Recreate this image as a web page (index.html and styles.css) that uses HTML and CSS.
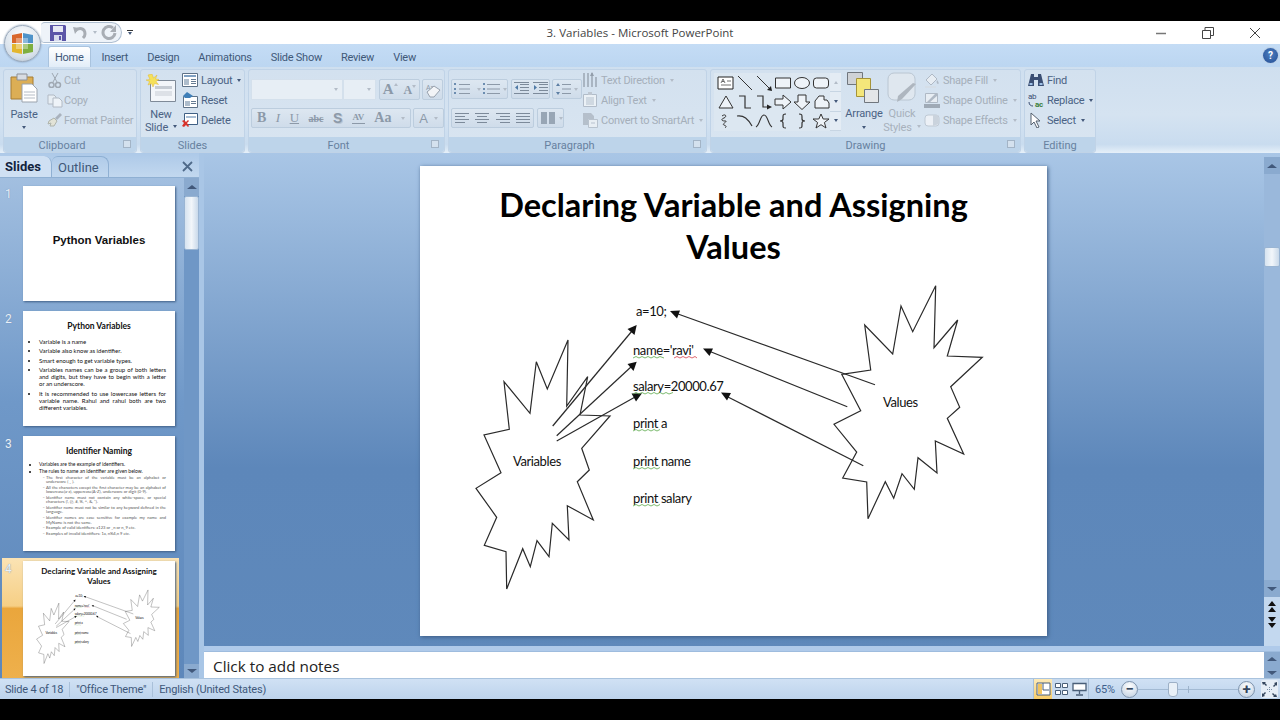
FILE: index.html
```html
<!DOCTYPE html>
<html lang="en">
<head>
    <meta charset="UTF-8">
    <meta name="viewport" content="width=device-width, initial-scale=1.0">
    <title>3. Variables - Microsoft PowerPoint</title>
    <link rel="stylesheet" href="styles.css">
</head>
<body>
    <div class="app">
        <div class="office-btn">
            <svg width="23" height="23" viewBox="0 0 23 23">
                <path d="M1 3l10-2v10H1z" fill="#d9672c"/>
                <path d="M12 1l10 2v8H12z" fill="#4f93c9"/>
                <path d="M1 12h10v10L1 20z" fill="#e3b62e"/>
                <path d="M12 12h10v8l-10 2z" fill="#7eaf3f"/>
                <path d="M5 6h12v11H5z" fill="#fff" opacity=".35"/>
            </svg>
        </div>

        <!-- title bar -->
        <div class="titlebar">
            <div class="qat-wrap">
                <div class="qat">
                    <svg width="16" height="16" viewBox="0 0 16 16">
                        <path d="M0 0h15l1 1v15H0z" fill="#5b55a8"/>
                        <path d="M3 1h10v6H3z" fill="#e6e8f4"/>
                        <path d="M4 10h8v6H4z" fill="#d8dcee"/>
                        <path d="M9 11h2v4H9z" fill="#5b55a8"/>
                    </svg>
                    <svg width="16" height="16" viewBox="0 0 16 16">
                        <path d="M2 6c4-4 10-3 10 3 0 2-1 3-2 4" fill="none" stroke="#a8adb4" stroke-width="3"/>
                        <path d="M0 2l6 1-4 6z" fill="#a8adb4"/>
                    </svg>
                    <span class="caret qat-caret"></span>
                    <svg width="16" height="16" viewBox="0 0 16 16">
                        <path d="M12 3a6 6 0 1 0 2 5" fill="none" stroke="#a8adb4" stroke-width="3"/>
                        <path d="M15 0v7H9z" fill="#a8adb4"/>
                    </svg>
                </div>
                <div class="qat-more">
                    <i></i>
                    <span class="caret dark"></span>
                </div>
            </div>
            <div class="doc-title">3. Variables - Microsoft PowerPoint</div>
            <div class="win-btns">
                <svg width="12" height="12" viewBox="0 0 12 12"><path d="M1 6.500h10" stroke="#777" stroke-width="1.500"/></svg>
                <svg width="12" height="12" viewBox="0 0 12 12"><path d="M.5 3.500h8v8h-8zM3 3.500V.5h8.500v8H8.500" fill="none" stroke="#444"/></svg>
                <svg width="12" height="12" viewBox="0 0 12 12"><path d="M1 1l10 10M11 1L1 11" stroke="#444"/></svg>
            </div>
        </div>

        <!-- tabs -->
        <div class="tabs">
            <a class="tab active" href="#">Home</a>
            <a class="tab" href="#">Insert</a>
            <a class="tab" href="#">Design</a>
            <a class="tab" href="#">Animations</a>
            <a class="tab" href="#">Slide Show</a>
            <a class="tab" href="#">Review</a>
            <a class="tab" href="#">View</a>
            <div class="help">?</div>
        </div>

        <!-- ribbon -->
        <div class="ribbon">
            <div class="group g-clipboard">
                <div class="group-body">
                    <div class="big-btn paste">
                        <svg width="28" height="30" viewBox="0 0 28 30">
                            <path d="M1 4h22v22H1z" fill="#dcae55" stroke="#a67c34"/>
                            <path d="M7 1h10v6H7z" fill="#d8dce2" stroke="#8b8f96"/>
                            <path d="M12 11h10l5 5v13H12z" fill="#fff" stroke="#9ba3ad"/>
                            <path d="M14 19h11M14 22h11M14 25h11" stroke="#b5bcc6"/>
                        </svg>
                        <span class="big-label">Paste</span>
                        <span class="caret dark"></span>
                    </div>
                    <div class="small-col">
                        <div class="small-btn off">
                            <svg class="ico" viewBox="0 0 16 16"><path d="M5 1l5 9M11 1L6 10" stroke="#8e959e" fill="none"/><circle cx="4.500" cy="13" r="2.500" fill="none" stroke="#8e959e" stroke-width="1.500"/><circle cx="11" cy="13" r="2.500" fill="none" stroke="#8e959e" stroke-width="1.500"/></svg>
                            Cut
                        </div>
                        <div class="small-btn off">
                            <svg class="ico" viewBox="0 0 16 16"><path d="M1 3h6l2 2v7H1z" fill="#eef2f6" stroke="#a6adb6"/><path d="M6 6h6l3 3v6H6z" fill="#f7f9fb" stroke="#a6adb6"/></svg>
                            Copy
                        </div>
                        <div class="small-btn off">
                            <svg class="ico" viewBox="0 0 16 16"><path d="M8 6l5-5 2 2-5 5z" fill="#9aa2ac"/><path d="M2 9l5-3 3 3-3 5H3l1-3-3 1z" fill="#e6e3cf" stroke="#a2a596"/></svg>
                            Format Painter
                        </div>
                    </div>
                </div>
                <div class="group-label shifted">Clipboard<span class="launcher"></span></div>
            </div>

            <div class="group g-slides">
                <div class="group-body">
                    <div class="big-btn new-slide">
                        <svg width="30" height="28" viewBox="0 0 30 28">
                            <path d="M4.500 6.500h25v21h-25z" fill="#f3f6fa" stroke="#7f8a98"/>
                            <path d="M9 12h17v3H9z" fill="#c6ccd4"/>
                            <path d="M9 17h17v5H9z" fill="#dde1e7"/>
                            <path d="M6 0l1.500 4L11 1l-1.500 4 3.500.5-3 2 2.500 3-4-1L7 13 5.500 9.500 2 11l1.500-3.500L0 6l4-.5L2 1z" fill="#f5e15a" stroke="#e0b93a" stroke-width=".5"/>
                        </svg>
                        <span class="big-label">New<br>Slide<span class="caret dark inline"></span></span>
                    </div>
                    <div class="small-col on">
                        <div class="small-btn">
                            <svg class="ico" viewBox="0 0 16 16"><path d="M.5 1.500h15v13H.5z" fill="#fff" stroke="#5e7288"/><path d="M2 3h12v2H2z" fill="#7fa0c2"/><path d="M2 7h5v6H2z" fill="#aebdcc"/><path d="M9 7h5v1H9zM9 9h5v1H9zM9 11h5v1H9z" fill="#667c93"/></svg>
                            Layout<span class="caret dark inline"></span>
                        </div>
                        <div class="small-btn">
                            <svg class="ico" viewBox="0 0 16 16"><path d="M1.500 4.500h14v11h-14z" fill="#fff" stroke="#5e7288"/><path d="M3 9h5v5H3z" fill="#aebdcc"/><path d="M9 9h5v1H9zM9 11h5v1H9z" fill="#667c93"/><path d="M1 4l4-4 6 4-3 2H3z" fill="#3f7fb8"/></svg>
                            Reset
                        </div>
                        <div class="small-btn">
                            <svg class="ico" viewBox="0 0 16 16"><path d="M2.500 1.500h13v11h-13z" fill="#fff" stroke="#3f5f84"/><path d="M4 4h10v2H4z" fill="#a9bed4"/><path d="M0 9l2-1 2 2 2-2 1 1-2 2 2 3-1 1-2-2-2 2-2-1 2-3z" fill="#d8322a"/></svg>
                            Delete
                        </div>
                    </div>
                </div>
                <div class="group-label">Slides</div>
            </div>

            <div class="group g-font">
                <div class="group-body font-body">
                    <div class="font-row">
                        <div class="combo name"><span class="caret"></span></div>
                        <div class="combo size"><span class="caret"></span></div>
                        <div class="btn-box grow">
                            <span class="serif-a">A<sup class="caret up"></sup></span>
                            <span class="serif-a small">A<sup class="caret"></sup></span>
                        </div>
                        <div class="btn-box clear">
                            <svg width="18" height="16" viewBox="0 0 18 16"><text x="2" y="8" class="mini">Aa</text><path d="M3 10l7-6 6 4-6 7H6z" fill="#f2f4f7" stroke="#98a2ae"/></svg>
                        </div>
                    </div>
                    <div class="font-row">
                        <div class="btn-box fmt">
                            <b>B</b><i>I</i><u>U</u><s class="abc">abc</s><b class="shadow-s">S</b>
                            <span class="av">AV<em></em></span>
                            <span class="aa">Aa</span><span class="caret"></span>
                        </div>
                        <div class="btn-box color"><span>A</span><span class="caret"></span></div>
                    </div>
                </div>
                <div class="group-label shifted">Font<span class="launcher"></span></div>
            </div>

            <div class="group g-paragraph">
                <div class="group-body para-body">
                    <div class="para-left">
                        <div class="font-row">
                            <div class="btn-box lists">
                                <svg width="24" height="14" viewBox="0 0 24 14"><path d="M7 2.500h11M7 7h11M7 11.500h11" stroke="#8c99a8"/><path d="M2 1h2v2H2zM2 6h2v2H2zM2 10h2v2H2z" fill="#6c8db0"/></svg>
                                <span class="caret"></span>
                                <svg width="20" height="14" viewBox="0 0 20 14"><path d="M5 2.500h13M5 7h13M5 11.500h13" stroke="#8c99a8"/><path d="M1 1h2v2H1zM1 6h2v2H1zM1 10h2v2H1z" fill="#6c8db0"/></svg>
                                <span class="caret"></span>
                            </div>
                            <div class="btn-box indents">
                                <svg width="15" height="14" viewBox="0 0 15 14"><path d="M6 2.500h9M6 5.500h9M6 8.500h9M0 11.500h15M0 .5h15" stroke="#7c8a9a"/><path d="M4 3v5L1 5.500z" fill="#4f7aa6"/></svg>
                                <svg width="15" height="14" viewBox="0 0 15 14"><path d="M6 2.500h9M6 5.500h9M6 8.500h9M0 11.500h15M0 .5h15" stroke="#7c8a9a"/><path d="M1 3v5l3-2.500z" fill="#4f7aa6"/></svg>
                            </div>
                            <div class="btn-box spacing">
                                <svg width="16" height="14" viewBox="0 0 16 14"><path d="M7 2.500h9M7 7h9M7 11.500h9" stroke="#8c99a8"/><path d="M3 1l2 3H1zM3 13l2-3H1z" fill="#5d7fa4"/></svg>
                                <span class="caret"></span>
                            </div>
                        </div>
                        <div class="font-row">
                            <div class="btn-box aligns">
                                <svg width="16" height="13" viewBox="0 0 16 13"><path d="M1 1.500h14M1 4.500h10M1 7.500h14M1 10.500h10" stroke="#7c8a9a"/></svg>
                                <svg width="16" height="13" viewBox="0 0 16 13"><path d="M1 1.500h14M3 4.500h10M1 7.500h14M3 10.500h10" stroke="#7c8a9a"/></svg>
                                <svg width="16" height="13" viewBox="0 0 16 13"><path d="M1 1.500h14M5 4.500h10M1 7.500h14M5 10.500h10" stroke="#7c8a9a"/></svg>
                                <svg width="16" height="13" viewBox="0 0 16 13"><path d="M1 1.500h14M1 4.500h14M1 7.500h14M1 10.500h14" stroke="#7c8a9a"/></svg>
                            </div>
                            <div class="btn-box cols">
                                <svg width="14" height="14" viewBox="0 0 14 14"><path d="M0 1h6v12H0zM8 1h6v12H8z" fill="#98a6b5"/></svg>
                                <span class="caret"></span>
                            </div>
                        </div>
                    </div>
                    <div class="small-col">
                        <div class="small-btn off">
                            <svg class="ico" viewBox="0 0 16 16"><path d="M2 1v14M6 1v14M10 1v14M14 5v10" stroke="#7d8793" stroke-width="1.300"/><path d="M10 0l2 4H8z" fill="#7d8793"/></svg>
                            Text Direction<span class="caret inline"></span>
                        </div>
                        <div class="small-btn off">
                            <svg class="ico" viewBox="0 0 16 16"><path d="M1.500 2.500h13v12h-13z" fill="#f3f6f9" stroke="#a6b0bc"/><path d="M4 6h8M4 8h8M4 10h8M4 12h8" stroke="#a9b5c2"/><path d="M6 0h4v3H6z" fill="#b7bec8"/></svg>
                            Align Text<span class="caret inline"></span>
                        </div>
                        <div class="small-btn off">
                            <svg class="ico" viewBox="0 0 16 16"><path d="M1 1h8l3 3v3H6v6H1z" fill="#aab4bf"/><path d="M6.500 7.500h9v8h-9z" fill="#eef2f5" stroke="#aeb8c3"/><path d="M9 11h4" stroke="#aeb8c3"/></svg>
                            Convert to SmartArt<span class="caret inline"></span>
                        </div>
                    </div>
                </div>
                <div class="group-label shifted">Paragraph<span class="launcher"></span></div>
            </div>

            <div class="group g-drawing">
                <div class="group-body draw-body">
                    <div class="gallery">
                        <div class="shapes">
                            <svg viewBox="0 0 18 16"><path d="M1 2h15v12H1z" fill="#fff" stroke="#222"/><path d="M4 8l2-4 2 4M5 6.500h2M10 6h4M4 10h10" fill="none" stroke="#333" stroke-width=".7"/></svg>
                            <svg viewBox="0 0 18 16"><path d="M2 1l14 14" stroke="#333"/></svg>
                            <svg viewBox="0 0 18 16"><path d="M2 1l12 12" stroke="#333"/><path d="M17 16l-5-1 4-4z" fill="#222"/></svg>
                            <svg viewBox="0 0 18 16"><path d="M1.500 3h15v10h-15z" fill="#eef3f8" stroke="#333"/></svg>
                            <svg viewBox="0 0 18 16"><ellipse cx="9" cy="8" rx="7.500" ry="5.500" fill="#eef3f8" stroke="#333"/></svg>
                            <svg viewBox="0 0 18 16"><rect x="1.500" y="3" width="15" height="10" rx="3" fill="#eef3f8" stroke="#333"/></svg>
                            <svg viewBox="0 0 18 16"><path d="M9 2l7 12H2z" fill="#eef3f8" stroke="#333"/></svg>
                            <svg viewBox="0 0 18 16"><path d="M3 2h6v12h6" fill="none" stroke="#333" stroke-width="1.200"/></svg>
                            <svg viewBox="0 0 18 16"><path d="M2 2h6v11h5" fill="none" stroke="#333" stroke-width="1.200"/><path d="M12 10.500l5 2.500-5 2.500z" fill="#222"/></svg>
                            <svg viewBox="0 0 18 16"><path d="M1 5h8V1l8 7-8 7v-4H1z" fill="#eef3f8" stroke="#333"/></svg>
                            <svg viewBox="0 0 18 16"><path d="M5 1h8v7h4l-8 7.500L1 8h4z" fill="#eef3f8" stroke="#333"/></svg>
                            <svg viewBox="0 0 18 16"><path d="M3 14V7l4-5h5v4h3l2 3v5z" fill="#eef3f8" stroke="#333"/></svg>
                            <svg viewBox="0 0 18 16"><path d="M5 3c4-3 5 1 2 2s-3 3 1 3-4 3-1 4 2 2 1 3" fill="none" stroke="#333"/></svg>
                            <svg viewBox="0 0 18 16"><path d="M1 3c7-1 11 3 15 10" fill="none" stroke="#333" stroke-width="1.200"/></svg>
                            <svg viewBox="0 0 18 16"><path d="M1 14C5 12 5 2 9 2s4 10 8 12" fill="none" stroke="#333" stroke-width="1.200"/></svg>
                            <svg viewBox="0 0 18 16"><path d="M12 1c-3 0-3 1-3 3v2c0 1-1 2-3 2 2 0 3 1 3 2v2c0 2 0 3 3 3" fill="none" stroke="#333" stroke-width="1.200"/></svg>
                            <svg viewBox="0 0 18 16"><path d="M6 1c3 0 3 1 3 3v2c0 1 1 2 3 2-2 0-3 1-3 2v2c0 2 0 3-3 3" fill="none" stroke="#333" stroke-width="1.200"/></svg>
                            <svg viewBox="0 0 18 16"><path d="M9 1l2.200 5H17l-4.600 3.500L14 15l-5-3.300L4 15l1.600-5.500L1 6h5.800z" fill="#eef3f8" stroke="#333"/></svg>
                        </div>
                        <div class="spin">
                            <span><i class="caret up"></i></span>
                            <span><i class="caret dark"></i></span>
                            <span class="more"><i class="caret dark"></i></span>
                        </div>
                    </div>
                    <div class="big-btn arrange">
                        <svg width="35" height="31" viewBox="0 0 35 31">
                            <path d="M.5.5h15v12H.5z" fill="#cfd2d6" stroke="#70767d"/>
                            <path d="M9.500 6.500h14v18h-14z" fill="#f4e67a" stroke="#a59338"/>
                            <path d="M17.500 17.500h14v13h-14z" fill="#e4e6e8" stroke="#70767d"/>
                        </svg>
                        <span class="big-label">Arrange</span>
                        <span class="caret dark"></span>
                    </div>
                    <div class="big-btn quick off">
                        <svg width="31" height="31" viewBox="0 0 31 31">
                            <rect x="1" y="1" width="27" height="27" rx="6" fill="#dfe7ef" stroke="#bac6d2"/>
                            <path d="M29 12L15 27l-5 3 1-6 15-13z" fill="#aeb6bf"/>
                        </svg>
                        <span class="big-label">Quick<br>Styles<span class="caret inline"></span></span>
                    </div>
                    <div class="small-col">
                        <div class="small-btn off">
                            <svg class="ico" viewBox="0 0 16 16"><path d="M2 8l6-6 5 5-6 6z" fill="#eef1f5" stroke="#a3acb7"/><path d="M13 8c2 2 2 4 1 4s-2-2-1-4z" fill="#a3acb7"/><path d="M1 14h11v2H1z" fill="#d6dde5"/></svg>
                            Shape Fill<span class="caret inline"></span>
                        </div>
                        <div class="small-btn off">
                            <svg class="ico" viewBox="0 0 16 16"><path d="M1.500 1.500h12v9h-12z" fill="#eef1f5" stroke="#a3acb7"/><path d="M3 10l9-9 2 2-9 8z" fill="#a3acb7"/><path d="M0 12h16v4H0z" fill="#8d97a3"/></svg>
                            Shape Outline<span class="caret inline"></span>
                        </div>
                        <div class="small-btn off">
                            <svg class="ico" viewBox="0 0 16 16"><rect x="1" y="3" width="14" height="11" rx="3" fill="#f3f5f8" stroke="#b8c1cc"/><path d="M9 3h5l1 5v4l-6 2z" fill="#c6ced7"/></svg>
                            Shape Effects<span class="caret inline"></span>
                        </div>
                    </div>
                </div>
                <div class="group-label">Drawing<span class="launcher"></span></div>
            </div>

            <div class="group g-editing">
                <div class="group-body">
                    <div class="small-col on">
                        <div class="small-btn">
                            <svg class="ico" viewBox="0 0 16 16"><path d="M3 2h3v3h4V2h3l3 12H10V8H6v6H0z" fill="#3a4e73"/><path d="M1.500 11h3v2h-3zM11.500 11h3v2h-3z" fill="#9fc1e6"/></svg>
                            Find
                        </div>
                        <div class="small-btn">
                            <svg class="ico" viewBox="0 0 16 16"><text x="0" y="7" class="mini dk">ab</text><text x="7" y="15" class="mini gr">ac</text><path d="M1 10c0 3 2 4 4 4" fill="none" stroke="#3a4e73"/></svg>
                            Replace<span class="caret dark inline"></span>
                        </div>
                        <div class="small-btn">
                            <svg class="ico" viewBox="0 0 16 16"><path d="M3 1v12l3-3 3 6 2-1-3-6h4z" fill="#fff" stroke="#55606e"/></svg>
                            Select<span class="caret dark inline"></span>
                        </div>
                    </div>
                </div>
                <div class="group-label">Editing</div>
            </div>
        </div>

        <!-- work area -->
        <div class="work">
            <div class="side">
                <div class="side-tabs">
                    <div class="side-tab active">Slides</div>
                    <div class="side-tab">Outline</div>
                    <svg class="side-close" width="11" height="11" viewBox="0 0 11 11"><path d="M1 1l9 9M10 1l-9 9" stroke="#4f6a8a" stroke-width="1.800"/></svg>
                </div>
                <div class="side-body">
                    <div class="thumb-list">
                        <div class="thumb-row">
                            <span class="num">1</span>
                            <div class="thumb cover"><b>Python Variables</b></div>
                        </div>
                        <div class="thumb-row">
                            <span class="num">2</span>
                            <div class="thumb">
                                <div class="t-title">Python Variables</div>
                                <ul class="t-list">
                                    <li>Variable is a name</li>
                                    <li>Variable also know as identifier.</li>
                                    <li>Smart enough to get variable types.</li>
                                    <li>Variables names can be a group of both letters and digits, but they have to begin with a letter or an underscore.</li>
                                    <li>It is recommended to use lowercase letters for variable name. Rahul and rahul both are two different variables.</li>
                                </ul>
                            </div>
                        </div>
                        <div class="thumb-row">
                            <span class="num">3</span>
                            <div class="thumb">
                                <div class="t-title">Identifier Naming</div>
                                <ul class="t-list tiny">
                                    <li>Variables are the example of identifiers.</li>
                                    <li>The rules to name an identifier are given below.
                                        <ul>
                                            <li>The first character of the variable must be an alphabet or underscore ( _ ).</li>
                                            <li>All the characters except the first character may be an alphabet of lowercase(a-z), uppercase(A-Z), underscore or digit (0-9).</li>
                                            <li>Identifier name must not contain any white-space, or special characters (!, @, #, %, ^, &amp;, *).</li>
                                            <li>Identifier name must not be similar to any keyword defined in the language.</li>
                                            <li>Identifier names are case sensitive for example my name and MyName is not the same.</li>
                                            <li>Example of valid identifiers: a123 or _n or n_9 etc.</li>
                                            <li>Examples of invalid identifiers: 1a, n%4,n 9 etc.</li>
                                        </ul>
                                    </li>
                                </ul>
                            </div>
                        </div>
                        <div class="thumb-row selected">
                            <span class="num">4</span>
                            <div class="thumb">
                                <div class="t-title two">Declaring Variable and Assigning Values</div>
                                <svg class="t-diagram" viewBox="420 270 627 366"><use href="#diagram"/></svg>
                            </div>
                        </div>
                    </div>
                    <div class="scroll side-scroll">
                        <div class="arrow-btn"><span class="tri up"></span></div>
                        <div class="scroll-thumb"></div>
                        <div class="scroll-track"></div>
                        <div class="arrow-btn end"><span class="tri"></span></div>
                    </div>
                </div>
            </div>

            <div class="editor">
                <div class="editor-top">
                    <div class="canvas">
                        <div class="slide">
                            <h1>Declaring Variable and Assigning Values</h1>
                            <svg class="diagram" viewBox="420 270 627 366">
                                <g id="diagram">
                                    <g class="ink">
                                        <polygon points="580,415 610,416 581.7,448.3 589.3,470 577.3,481.7 593.3,520 567.3,505.7 569,540 552.3,523.3 549,556.7 537,540.7 530.3,566.7 522.7,548.7 506.7,589 506,551.7 484.3,545.3 496.7,517.3 476,488.3 501,472.7 484,435 509.3,429.3 504,381.7 530,413.3 536.3,361.7 547.3,389 568,340 566.7,406 587.7,376.7"/>
                                        <polygon points="841.7,374.3 870.7,370 864.7,325 892.7,354 901,306 912.7,331.7 935.7,285.7 934,347.7 957.7,320 947.3,356 982.3,357.3 950.7,386.7 959.7,407.3 947.3,418.3 963.7,454 935.3,441 937,473 918,457.7 914.3,489.3 902,473.7 893.7,498.3 885.3,481.7 868,518.7 866.7,482 842.7,478 856.7,452 834,424.3 860.7,410.7"/>
                                        <line x1="552.7" y1="426" x2="632" y2="331"/>
                                        <line x1="556.7" y1="435.7" x2="632" y2="366"/>
                                        <line x1="556.7" y1="441" x2="636" y2="396.5"/>
                                        <line x1="875" y1="384.7" x2="678" y2="314"/>
                                        <line x1="847.3" y1="406.7" x2="710" y2="351.5"/>
                                        <line x1="863.3" y1="465.7" x2="727" y2="396.5"/>
                                    </g>
                                    <g class="heads">
                                        <polygon points="636.7,325 634.5,335 627.5,329"/>
                                        <polygon points="636.7,361.7 633.5,371 627.5,364"/>
                                        <polygon points="642,393.3 636,401.5 631.5,393.5"/>
                                        <polygon points="670,311 680,310.5 677,318.5"/>
                                        <polygon points="703,348.5 713,348.5 709.5,356"/>
                                        <polygon points="721,392.5 731,393 727,400.5"/>
                                    </g>
                                    <g class="words">
                                        <text x="636" y="316">a=10;</text>
                                        <text x="633" y="355">name='ravi'</text>
                                        <text x="633" y="391">salary=20000.67</text>
                                        <text x="633" y="428">print a</text>
                                        <text x="633" y="466">print name</text>
                                        <text x="633" y="503">print salary</text>
                                        <text x="513" y="465.500">Variables</text>
                                        <text x="883" y="407">Values</text>
                                    </g>
                                    <g class="squiggle green">
                                        <polyline points="633,358 636,356.500 639,358 642,356.500 645,358 648,356.500 651,358 654,356.500 657,358 660,356.500 664,358"/>
                                        <polyline points="633,394 636,392.500 639,394 642,392.500 645,394 648,392.500 651,394 654,392.500 657,394 660,392.500 663,394 666,392.500 669,394 673,392.500"/>
                                        <polyline points="633,431 636,429.500 639,431 642,429.500 645,431 648,429.500 651,431 654,429.500 657,431 660,429.500"/>
                                        <polyline points="633,469 636,467.500 639,469 642,467.500 645,469 648,467.500 651,469 654,467.500 657,469 660,467.500"/>
                                        <polyline points="633,506 636,504.500 639,506 642,504.500 645,506 648,504.500 651,506 654,504.500 657,506 660,504.500"/>
                                    </g>
                                    <polyline class="squiggle red" points="674,358 677,356.500 680,358 683,356.500 686,358 689,356.500 692,358 695,356.500 697,358"/>
                                </g>
                            </svg>
                        </div>
                    </div>
                    <div class="scroll main-scroll">
                        <div class="arrow-btn"><span class="tri up"></span></div>
                        <div class="scroll-gap"></div>
                        <div class="scroll-thumb short"></div>
                        <div class="scroll-track"></div>
                        <div class="arrow-btn"><span class="tri"></span></div>
                        <div class="page-btns">
                            <svg width="10" height="12" viewBox="0 0 10 12"><path d="M5 0l4 5H1zM5 6l4 5H1z" fill="#111"/></svg>
                            <svg width="10" height="12" viewBox="0 0 10 12"><path d="M1 1h8L5 6zM1 7h8l-4 5z" fill="#111"/></svg>
                        </div>
                    </div>
                </div>
                <div class="notes">
                    <div class="notes-text">Click to add notes</div>
                    <div class="scroll notes-scroll">
                        <div class="arrow-btn"><span class="tri up"></span></div>
                        <div class="arrow-btn"><span class="tri"></span></div>
                    </div>
                </div>
            </div>
        </div>

        <!-- status bar -->
        <div class="status">
            <span class="st-item">Slide 4 of 18</span>
            <span class="st-item">"Office Theme"</span>
            <span class="st-item">English (United States)</span>
            <div class="st-right">
                <div class="views">
                    <span class="view active"><svg width="15" height="14" viewBox="0 0 15 14"><path d="M1 1h13v12H1z" fill="#fff" stroke="#4a5f78"/><path d="M2 2h4v10H2z" fill="#f2c45f"/><path d="M7 8h6M7 1v7" stroke="#4a5f78"/></svg></span>
                    <span class="view"><svg width="15" height="14" viewBox="0 0 15 14"><path d="M1.500 1.500h5v4h-5zM8.500 1.500h5v4h-5zM1.500 8.500h5v4h-5zM8.500 8.500h5v4h-5z" fill="#fff" stroke="#4a5f78"/></svg></span>
                    <span class="view"><svg width="15" height="14" viewBox="0 0 15 14"><path d="M1 1.500h13v7H1z" fill="#fff" stroke="#4a5f78" stroke-width="1.300"/><path d="M7.500 9v3M4 13h7" stroke="#4a5f78" stroke-width="1.300"/></svg></span>
                </div>
                <span class="zoom-val">65%</span>
                <span class="round-btn">&minus;</span>
                <div class="slider"><span class="tick"></span><span class="knob"></span></div>
                <span class="round-btn">+</span>
                <span class="fit">
                    <svg width="15" height="15" viewBox="0 0 15 15"><path d="M0 0h4L3 1l2 2-1 1-2-2-1 1zM15 0v4l-1-1-2 2-1-1 2-2-1-1zM0 15v-4l1 1 2-2 1 1-2 2 1 1zM15 15h-4l1-1-2-2 1-1 2 2 1-1z" fill="#34465e"/><path d="M5 7.500h5M7.500 5v5" stroke="#7a8ea6" stroke-dasharray="1 1"/></svg>
                </span>
            </div>
        </div>
    </div>
</body>
</html>
```

FILE: styles.css
```css
/* Global */
body {
    margin: 0;
    background-color: #000;
    font-family: Roboto, "Open Sans", sans-serif;
    overflow: hidden;
}

a {
    text-decoration: none;
    color: inherit;
}

.app {
    position: relative;
    display: flex;
    flex-direction: column;
    width: 1280px;
    height: 678px;
    margin-top: 21px;
    background: #c5daf0;
}

/* Little dropdown triangles */
.caret {
    display: inline-block;
    width: 0;
    height: 0;
    border-left: 2.5px solid transparent;
    border-right: 2.5px solid transparent;
    border-top: 3px solid #b3bcc7;
}

.caret.dark {
    border-top-color: #44597a;
}

.caret.up {
    border-top: 0;
    border-bottom: 3px solid #b3bcc7;
}

.caret.inline {
    margin-left: 5px;
    vertical-align: 3px;
}

/* Office button */
.office-btn {
    position: absolute;
    top: 4px;
    left: 4px;
    z-index: 5;
    display: flex;
    align-items: center;
    justify-content: center;
    width: 35px;
    height: 35px;
    border: 1px solid #9aa9bb;
    border-radius: 50%;
    background: radial-gradient(circle at 50% 30%, #fff, #d5dfe9 70%, #aebccb);
    box-shadow: 0 0 2px #6d86a3;
}

/* Title bar */
.titlebar {
    display: grid;
    grid-template-columns: 1fr auto 1fr;
    align-items: center;
    flex: 0 0 23px;
    background: #fff;
}

.qat-wrap {
    display: flex;
    align-items: center;
    gap: 5px;
    padding-left: 41px;
}

.qat {
    display: flex;
    align-items: center;
    gap: 7px;
    box-sizing: border-box;
    width: 81px;
    height: 21px;
    padding-left: 9px;
    border: 1px solid #aebed0;
    border-left: 0;
    border-radius: 4px 11px 11px 4px;
    background: #eef3f9;
}

.qat-caret {
    margin: 0 -3px;
}

.qat-more {
    display: flex;
    flex-direction: column;
    align-items: center;
    gap: 1px;
    width: 6px;
}

.qat-more i {
    width: 6px;
    height: 1px;
    background: #333;
}

.doc-title {
    color: #444;
    font-family: "Open Sans", sans-serif;
    font-size: 11.5px;
}

.win-btns {
    display: flex;
    justify-content: flex-end;
    gap: 35px;
    padding-right: 19px;
}

/* Ribbon tabs */
.tabs {
    display: flex;
    align-items: flex-end;
    flex: 0 0 23px;
    padding-left: 48px;
    background: linear-gradient(to bottom, #c4dcf5, #bcd6f1);
}

.tab {
    box-sizing: border-box;
    height: 21px;
    padding: 0 9.5px;
    color: #3f5878;
    font-size: 11px;
    letter-spacing: -0.25px;
    line-height: 24px;
}

.tab.active {
    width: 43px;
    margin-right: 1px;
    padding: 0 6px;
    border: 1px solid #a9c3de;
    border-bottom: 0;
    border-radius: 3px 3px 0 0;
    background: linear-gradient(to bottom, #fff, #e2edf8);
    line-height: 22px;
}

.help {
    align-self: center;
    width: 15px;
    height: 15px;
    margin-left: auto;
    margin-right: 2px;
    border-radius: 50%;
    background: radial-gradient(circle at 50% 40%, #4d7fc0, #234c93);
    box-shadow: 0 0 0 1px #bcd0e6;
    color: #fff;
    font-size: 10px;
    font-weight: 700;
    line-height: 15px;
    text-align: center;
}

/* Ribbon */
.ribbon {
    display: flex;
    flex: 0 0 86px;
    gap: 3px;
    box-sizing: border-box;
    padding: 2px 0 0 3px;
    background: linear-gradient(to bottom, #cfdfef, #d5e3f1 55%, #c9dcef 90%, #e6f0f9);
}

.group {
    display: flex;
    flex-direction: column;
    box-sizing: border-box;
    border: 1px solid #c0d3e7;
    border-radius: 3px;
    background: linear-gradient(to bottom, #d3e1ef, #d9e5f1);
}

.g-clipboard { width: 134px; }
.g-slides { width: 105px; }
.g-font { width: 197px; }
.g-paragraph { width: 259px; }
.g-drawing { width: 311px; }
.g-editing { width: 72px; }

.group-body {
    display: flex;
    flex: 0 0 67px;
    box-sizing: border-box;
}

.group-label {
    position: relative;
    flex: 0 0 15px;
    min-height: 0;
    border-radius: 0 0 3px 3px;
    background: #bdd4ea;
    color: #67819f;
    font-size: 11px;
    line-height: 17px;
    text-align: center;
}

.group-label.shifted {
    padding-right: 16px;
}

.launcher {
    position: absolute;
    top: 3px;
    right: 5px;
    width: 6px;
    height: 6px;
    border: 1px solid #a3b4c6;
    background: #d4e1ee;
}

.big-btn {
    display: flex;
    flex-direction: column;
    align-items: center;
    color: #4a6284;
    font-size: 11px;
    letter-spacing: -0.15px;
    line-height: 14px;
    text-align: center;
}

.big-btn.off {
    color: #a7b1bc;
}

.big-label {
    white-space: nowrap;
}

.paste {
    width: 38px;
    margin-left: 1px;
    padding-top: 3px;
}

.paste .big-label {
    margin-top: 5px;
}

.paste .caret {
    margin-top: 4px;
}

.small-col {
    display: flex;
    flex-direction: column;
}

.small-btn {
    display: flex;
    align-items: center;
    gap: 3px;
    height: 20px;
    color: #a5afba;
    font-size: 11px;
    letter-spacing: -0.25px;
    white-space: nowrap;
}

.small-col.on .small-btn {
    color: #4a6284;
}

.small-btn .caret.inline {
    margin-left: 2px;
    vertical-align: 0;
}

.ico {
    flex: 0 0 16px;
    width: 16px;
    height: 16px;
}

.small-btn.off .ico {
    opacity: 0.75;
}

.g-clipboard .small-col {
    margin-left: 4px;
}

.g-clipboard .small-btn {
    gap: 1px;
}

.new-slide {
    width: 38px;
    margin-left: 1px;
    padding-top: 4px;
}

.new-slide .big-label {
    margin-top: 6px;
    line-height: 13px;
}

.g-slides .small-col {
    margin-left: 2px;
}

/* Font group */
.font-body {
    flex-direction: column;
    gap: 8px;
    padding: 9px 0 0 2px;
}

.font-row {
    display: flex;
    gap: 2px;
    height: 21px;
}

.combo {
    display: flex;
    align-items: center;
    justify-content: flex-end;
    box-sizing: border-box;
    height: 21px;
    padding-right: 4px;
    background: #e7eef5;
    border: 1px solid #d4e0ec;
}

.combo.name { width: 92px; margin-right: -2px; }
.combo.size { width: 33px; margin-right: 1px; }

.btn-box {
    display: flex;
    align-items: center;
    box-sizing: border-box;
    height: 21px;
    border: 1px solid #bccdde;
    border-radius: 2px;
    background: linear-gradient(to bottom, #dde7f1, #cfdcea);
    color: #8c99a8;
}

.grow {
    justify-content: space-around;
    width: 41px;
}

.clear {
    justify-content: center;
    width: 21px;
}

.serif-a {
    display: flex;
    font-family: "Liberation Serif", serif;
    font-size: 15px;
    font-weight: 700;
    line-height: 1;
}

.serif-a.small {
    font-size: 12px;
}

.serif-a sup {
    margin-top: 1px;
}

.mini {
    fill: #8c99a8;
    font-size: 7px;
}

.mini.dk {
    fill: #3a4e73;
    font-size: 8px;
}

.mini.gr {
    fill: #3b7f3a;
    font-size: 8px;
    font-weight: 700;
}

.fmt {
    justify-content: space-between;
    box-sizing: border-box;
    width: 160px;
    height: 20px;
    padding: 0 5px;
    font-family: "Liberation Serif", serif;
    font-size: 14px;
}

.fmt u,
.fmt i {
    font-size: 13px;
}

.fmt .abc {
    font-size: 10px;
    font-weight: 700;
}

.shadow-s {
    font-family: "Liberation Sans", sans-serif;
    text-shadow: 1px 1px 0 #bcc6d2;
}

.av {
    display: flex;
    flex-direction: column;
    align-items: center;
    font-size: 9px;
    font-weight: 700;
    line-height: 10px;
}

.av em {
    width: 13px;
    height: 1px;
    margin-top: 1px;
    background: #8c99a8;
}

.aa {
    font-weight: 700;
}

.color {
    justify-content: center;
    gap: 6px;
    width: 31px;
    height: 20px;
    font-family: "Liberation Sans", sans-serif;
    font-size: 13px;
}

/* Paragraph group */
.para-body {
    gap: 0;
    padding: 9px 0 0 2px;
}

.para-left {
    display: flex;
    flex-direction: column;
    gap: 8px;
    width: 131px;
}

.para-left .btn-box {
    height: 20px;
}

.lists {
    gap: 1px;
    width: 57px;
}

.indents {
    justify-content: space-around;
    width: 40px;
    margin-left: 1px;
}

.spacing {
    gap: 3px;
    width: 30px;
    padding-left: 2px;
}

.aligns {
    justify-content: space-around;
    width: 83px;
}

.cols {
    gap: 4px;
    width: 27px;
    margin-left: 1px;
    padding-left: 3px;
}

.para-body .small-col {
    margin-top: -9px;
}

/* Drawing group */
.draw-body {
    padding: 3px 0 0 3px;
}

.gallery {
    display: flex;
    width: 127px;
    height: 58px;
    background: #dce7f1;
}

.shapes {
    display: grid;
    flex: 1;
    grid-template-columns: repeat(6, 19px);
    grid-auto-rows: 19px;
    align-items: center;
    justify-items: center;
    padding-left: 2px;
}

.shapes svg {
    width: 18px;
    height: 16px;
}

.spin {
    display: flex;
    flex-direction: column;
    width: 11px;
}

.spin span {
    display: flex;
    flex: 1;
    align-items: center;
    justify-content: center;
    background: #e4ecf4;
    border-bottom: 1px solid #c7d5e3;
}

.arrange {
    width: 38px;
    margin-left: 4px;
    margin-top: -1px;
}

.arrange .big-label {
    margin-top: 4px;
}

.arrange .caret {
    margin-top: 5px;
}

.quick {
    width: 36px;
    margin-left: 1px;
    margin-top: -1px;
}

.quick .big-label {
    margin-top: 4px;
}

.draw-body .small-col {
    margin-top: -3px;
    margin-left: 4px;
}

/* Editing group */
.g-editing .small-col {
    margin-left: 3px;
}

/* Work area */
.work {
    display: flex;
    flex: 1;
    min-height: 0;
    background: linear-gradient(to bottom, #a9c6e6, #5d87ba 60%, #5f89bb);
}

.side {
    display: flex;
    flex-direction: column;
    flex: 0 0 199px;
    min-width: 0;
}

.side-tabs {
    position: relative;
    display: flex;
    align-items: flex-end;
    flex: 0 0 25px;
    box-sizing: border-box;
    border-bottom: 1px solid #8fb0d3;
    background: linear-gradient(to bottom, #adc9e8, #c2d8ef);
}

.side-tab {
    height: 21px;
    color: #3f5878;
    font-size: 13px;
    line-height: 22px;
}

.side-tab.active {
    width: 52px;
    box-sizing: border-box;
    padding-left: 5px;
    border-right: 1px solid #8fb0d3;
    border-radius: 0 8px 0 0;
    background: #cfe0f3;
    color: #12233d;
    font-weight: 700;
}

.side-tab:not(.active) {
    box-sizing: border-box;
    width: 57px;
    padding-left: 6px;
    border-top: 1px solid #8fb0d3;
    border-right: 1px solid #8fb0d3;
    border-radius: 6px 8px 0 0;
}

.side-close {
    position: absolute;
    right: 6px;
    bottom: 5px;
}

.side-body {
    display: flex;
    flex: 1;
    min-height: 0;
    background: linear-gradient(to bottom, #a2bfe0 0, #6f98c8 45%, #5d87ba 100%);
}

.thumb-list {
    flex: 1;
    padding: 5px 5px 0 2px;
    overflow: hidden;
}

.thumb-row {
    display: flex;
    box-sizing: border-box;
    height: 120px;
    margin-bottom: 5px;
    padding: 3px 0 0 3px;
}

.thumb-row.selected {
    margin-bottom: 0;
    background: linear-gradient(to bottom, #fbe3b4, #f6cf85 40%, #eaa63c 42%, #eeb04c);
}

.num {
    flex: 0 0 18px;
    color: #e9f0f8;
    font-size: 12px;
    line-height: 16px;
    text-shadow: 0 0 1px #5f7fa5;
}

.thumb {
    position: relative;
    box-sizing: border-box;
    flex: 0 0 152px;
    height: 115px;
    background: #fff;
    box-shadow: 1px 1px 2px #3f5f86;
    color: #111;
    font-family: Lato, sans-serif;
    overflow: hidden;
}

.thumb.cover {
    display: flex;
    align-items: center;
    justify-content: center;
    padding-bottom: 7px;
    font-family: "Liberation Sans", sans-serif;
    font-size: 11.500px;
}

.t-title {
    margin-top: 10px;
    font-size: 8.500px;
    font-weight: 700;
    line-height: 10px;
    text-align: center;
}

.t-title.two {
    margin-top: 5px;
    padding: 0 10px;
    font-size: 8px;
}

.t-list {
    margin: 7px 9px 0 16px;
    padding: 0;
    font-size: 6px;
    line-height: 7.300px;
    text-align: justify;
}

.t-list li {
    margin-bottom: 2px;
}

.t-list.tiny {
    margin-top: 6px;
    font-size: 5px;
    line-height: 5.200px;
}

.t-list.tiny ul {
    margin: 1.500px 0 0;
    padding-left: 7px;
    font-size: 4.100px;
    line-height: 4.300px;
    list-style: "\2013\00a0";
    color: #555;
}

.t-list.tiny ul li {
    margin-bottom: 1.500px;
}

.t-diagram {
    display: block;
    width: 152px;
    height: 89px;
}

/* Diagram strokes */
.ink polygon,
.ink line {
    fill: none;
    stroke: #2a2a2a;
    stroke-width: 1.2;
}

.heads polygon {
    fill: #111;
}

.words text {
    fill: #111;
    font-family: Lato, sans-serif;
    font-size: 13px;
    letter-spacing: -0.4px;
}

.squiggle {
    fill: none;
    stroke-width: 0.8;
}

.squiggle.green polyline {
    stroke: #5aa84a;
}

.squiggle.red {
    stroke: #d5404a;
}

/* Scrollbars */
.scroll {
    display: flex;
    flex-direction: column;
    flex: 0 0 15px;
    background: #6f97c6;
}

.arrow-btn {
    display: flex;
    align-items: center;
    justify-content: center;
    flex: 0 0 18px;
    background: #8aaacf;
}

.arrow-btn.end {
    flex-basis: 14px;
}

.tri {
    width: 0;
    height: 0;
    border-left: 5px solid transparent;
    border-right: 5px solid transparent;
    border-top: 4px solid #41587a;
}

.tri.up {
    border-top: 0;
    border-bottom: 4px solid #41587a;
}

.scroll-thumb {
    flex: 0 0 54px;
    box-sizing: border-box;
    border: 1px solid #9ab5d3;
    border-radius: 2px;
    background: linear-gradient(to right, #d6e3f0, #f2f6fa 50%, #c9d9ea);
}

.scroll-thumb.short {
    flex-basis: 20px;
}

.scroll-track {
    flex: 1;
}

/* Editor */
.editor {
    display: flex;
    flex-direction: column;
    flex: 1;
    min-width: 0;
    margin-left: 5px;
    box-shadow: -5px 0 0 #a9c6e6;
}

.editor-top {
    display: flex;
    flex: 0 0 493px;
    min-height: 0;
}

.canvas {
    display: flex;
    justify-content: center;
    flex: 1;
    padding-top: 13px;
    min-width: 0;
}

.slide {
    flex: 0 0 627px;
    height: 470px;
    margin-right: 1px;
    background: #fff;
    box-shadow: 1px 1px 4px #3b5a82;
}

.slide h1 {
    box-sizing: border-box;
    width: 520px;
    height: 104px;
    margin: 0 auto;
    padding-top: 18px;
    color: #000;
    font-family: Lato, sans-serif;
    font-size: 32.500px;
    font-weight: 700;
    line-height: 42px;
    text-align: center;
}

.diagram {
    display: block;
    width: 627px;
    height: 366px;
}

.main-scroll {
    flex: 0 0 16px;
    margin-top: 4px;
    background: #9ab8db;
}

.main-scroll .scroll-gap {
    flex: 0 0 73px;
}

.main-scroll .arrow-btn {
    flex-basis: 17px;
}

.page-btns {
    display: flex;
    flex-direction: column;
    align-items: center;
    gap: 3px;
    flex: 0 0 49px;
    padding-top: 4px;
    box-sizing: border-box;
    background: #c3d8ef;
}

.notes {
    display: flex;
    flex: 1;
    margin-top: 5px;
    border-top: 1px solid #9ebcde;
    background: #fff;
    box-shadow: 0 -5px 0 #afcaea;
}

.notes-text {
    flex: 1;
    padding-left: 9px;
    color: #222;
    font-family: "Open Sans", sans-serif;
    font-size: 15.300px;
    line-height: 28px;
}

.notes-scroll {
    flex: 0 0 16px;
    background: #9ab8db;
}

.notes-scroll .arrow-btn {
    flex: 1;
}

/* Status bar */
.status {
    display: flex;
    align-items: center;
    flex: 0 0 21px;
    box-sizing: border-box;
    padding-left: 5px;
    border-top: 1px solid #a9c3de;
    background: linear-gradient(to bottom, #d0e1f4, #bdd3ec);
    color: #40587a;
    font-size: 11px;
    letter-spacing: -0.2px;
}

.st-item {
    padding-right: 6px;
    margin-right: 6px;
    border-right: 1px solid #a9c0d9;
    line-height: 15px;
}

.st-item:nth-child(3) {
    border: 0;
}

.st-right {
    display: flex;
    align-items: center;
    height: 20px;
    margin-left: auto;
}

.views {
    display: flex;
    height: 20px;
    margin-right: 6px;
    background: #c8daee;
    border-left: 1px solid #a9c0d9;
    border-right: 1px solid #a9c0d9;
}

.view {
    display: flex;
    align-items: center;
    justify-content: center;
    width: 18px;
}

.view.active {
    background: linear-gradient(to bottom, #fdeab8, #f8cd6a);
}

.zoom-val {
    width: 26px;
    color: #3e5f8c;
    font-size: 11px;
}

.round-btn {
    display: flex;
    align-items: center;
    justify-content: center;
    box-sizing: border-box;
    width: 17px;
    height: 17px;
    border: 1px solid #7d93ad;
    border-radius: 50%;
    background: radial-gradient(circle at 50% 30%, #fff, #bccde0);
    color: #34465e;
    font-size: 15px;
    font-weight: 700;
    line-height: 1;
}

.slider {
    position: relative;
    width: 100px;
    height: 1px;
    background: #a3bad3;
}

.tick {
    position: absolute;
    top: -3px;
    left: 50px;
    width: 1px;
    height: 7px;
    background: #9db3cb;
}

.knob {
    position: absolute;
    top: -7px;
    left: 30px;
    width: 8px;
    height: 13px;
    border: 1px solid #9db0c6;
    border-radius: 2px 2px 4px 4px;
    background: #e9f0f7;
}

.fit {
    display: flex;
    align-items: center;
    justify-content: center;
    width: 17px;
    height: 18px;
    margin: 0 2px 0 6px;
    background: #e6eef7;
    border-radius: 2px;
}
```
